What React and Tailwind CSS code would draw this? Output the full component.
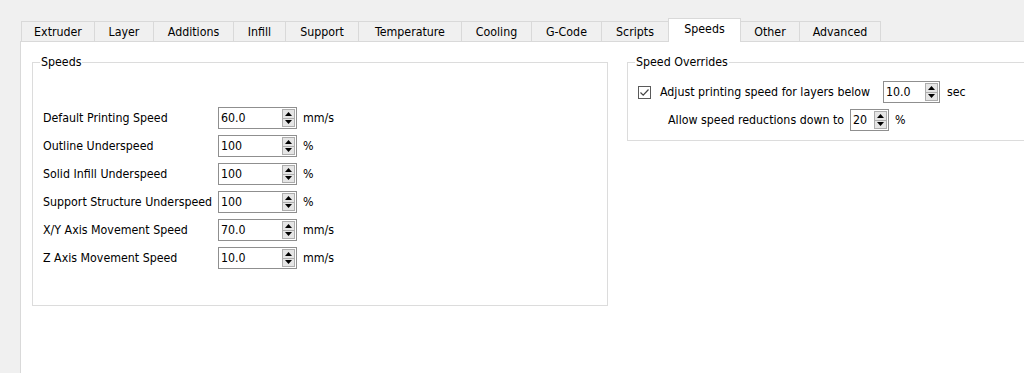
import { useState } from "react";

const tabs = [
  { name: "Extruder", w: "w-[74px]" },
  { name: "Layer", w: "w-[60px]" },
  { name: "Additions", w: "w-[81px]" },
  { name: "Infill", w: "w-[53px]" },
  { name: "Support", w: "w-[74px]" },
  { name: "Temperature", w: "w-[104px]" },
  { name: "Cooling", w: "w-[71px]" },
  { name: "G-Code", w: "w-[71px]" },
  { name: "Scripts", w: "w-[68px]" },
  { name: "Speeds", w: "w-[73px]" },
  { name: "Other", w: "w-[60px]" },
  { name: "Advanced", w: "w-[82px]" },
];

const speedRows = [
  { label: "Default Printing Speed", value: "60.0", unit: "mm/s" },
  { label: "Outline Underspeed", value: "100", unit: "%" },
  { label: "Solid Infill Underspeed", value: "100", unit: "%" },
  { label: "Support Structure Underspeed", value: "100", unit: "%" },
  { label: "X/Y Axis Movement Speed", value: "70.0", unit: "mm/s" },
  { label: "Z Axis Movement Speed", value: "10.0", unit: "mm/s" },
];

function SpinBox({ value, width }) {
  return (
    <div
      className={`flex h-[22px] ${width} shrink-0 items-center border border-[#8f8f8f] bg-white`}
    >
      <span className="flex-1 pl-[2px] leading-[20px]">{value}</span>
      <div className="mr-[1px] flex h-[18px] w-[13px] flex-col">
        <div className="flex flex-1 items-center justify-center border border-[#adadad] bg-[#e5e5e5]">
          <svg width="7" height="4" viewBox="0 0 7 4">
            <polygon points="3.5,0 7,4 0,4" fill="#000" />
          </svg>
        </div>
        <div className="flex flex-1 items-center justify-center border border-t-0 border-[#adadad] bg-[#e5e5e5]">
          <svg width="7" height="4" viewBox="0 0 7 4">
            <polygon points="0,0 7,0 3.5,4" fill="#000" />
          </svg>
        </div>
      </div>
    </div>
  );
}

export default function App() {
  const [active, setActive] = useState("Speeds");
  const [adjust, setAdjust] = useState(true);

  return (
    <div
      className="h-[373px] w-full overflow-hidden bg-[#f0f0f0] pl-[20px] pt-[18px] text-[12.3px] text-black"
      style={{
        fontFamily: '"DejaVu Sans Condensed", "Liberation Sans", Arial, sans-serif',
      }}
    >
      <div className="flex h-[23px] items-end pl-[1px]">
        {tabs.map((tab) => {
          const selected = tab.name === active;
          return (
            <div
              key={tab.name}
              onClick={() => setActive(tab.name)}
              className={
                selected
                  ? `relative z-10 -mb-px -ml-px flex h-[24px] ${tab.w} items-center justify-center border border-b-0 border-[#d9d9d9] bg-white pb-[2px]`
                  : `-ml-px flex h-[20px] ${tab.w} items-center justify-center border border-b-0 border-[#d9d9d9] bg-[#f0f0f0] pt-[2px] first:ml-0`
              }
            >
              {tab.name}
            </div>
          );
        })}
      </div>

      <div className="flex h-[340px] border-l border-t border-[#d9d9d9] bg-white pl-[11px] pt-[13px]">
        <fieldset className="h-[251px] w-[576px] shrink-0 border border-[#dcdcdc] px-0">
          <legend className="ml-[7px] px-[1px] leading-[14px]">Speeds</legend>
          <div className="flex flex-col gap-[6px] pl-[10px] pt-[38px]">
            {speedRows.map((row) => (
              <div key={row.label} className="flex h-[22px] items-center">
                <span className="w-[175px] shrink-0">{row.label}</span>
                <SpinBox value={row.value} width="w-[79px]" />
                <span className="ml-[6px]">{row.unit}</span>
              </div>
            ))}
          </div>
        </fieldset>

        <fieldset className="ml-[19px] h-[86px] w-[420px] shrink-0 border border-[#dcdcdc] px-0">
          <legend className="ml-[7px] px-[1px] leading-[14px]">
            Speed Overrides
          </legend>
          <div className="flex flex-col gap-[6px] pt-[12px]">
            <div className="flex h-[22px] items-center pl-[10px]">
              <div
                onClick={() => setAdjust(!adjust)}
                className="flex h-[13px] w-[13px] shrink-0 items-center justify-center border border-[#5a5a5a] bg-white"
              >
                {adjust && (
                  <svg width="11" height="11" viewBox="0 0 11 11">
                    <polyline
                      points="1.5,5.5 4.2,8.2 9.5,2.5"
                      fill="none"
                      stroke="#444"
                      strokeWidth="1.2"
                    />
                  </svg>
                )}
              </div>
              <span className="ml-[9px] w-[223px] shrink-0">
                Adjust printing speed for layers below
              </span>
              <SpinBox value="10.0" width="w-[57px]" />
              <span className="ml-[7px]">sec</span>
            </div>
            <div className="flex h-[22px] items-center pl-[40px]">
              <span className="w-[182px] shrink-0">
                Allow speed reductions down to
              </span>
              <SpinBox value="20" width="w-[39px]" />
              <span className="ml-[6px]">%</span>
            </div>
          </div>
        </fieldset>
      </div>
    </div>
  );
}
